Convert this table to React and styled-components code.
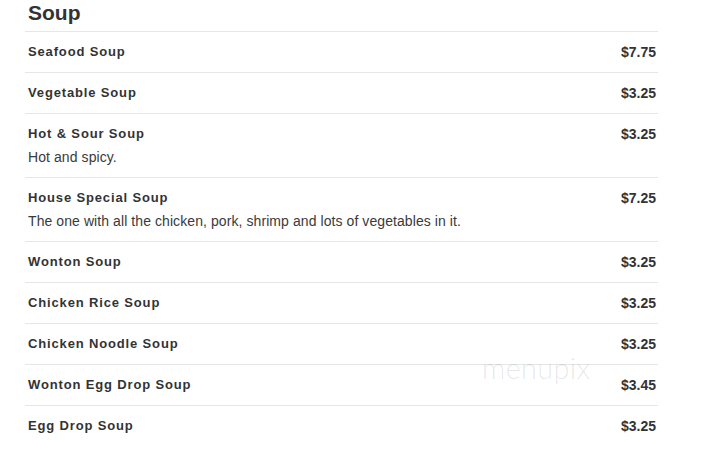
import React from "react";
import styled, { createGlobalStyle } from "styled-components";

const GlobalStyle = createGlobalStyle`
body {
  margin: 0;
  background: #fff;
  font-family: "Liberation Sans", Arial, sans-serif;
  color: #333;
}
`;

const Page = styled.div`
  position: relative;
  width: 633px;
  margin-left: 25px;
  padding-top: 1px;
`;

const Heading = styled.h2`
  margin: 0 0 6px 0;
  padding-left: 3px;
  font-size: 21px;
  line-height: 24px;
  font-weight: bold;
  color: #333;
`;

const Item = styled.div`
  border-top: 1px solid #e6e6e6;
  padding: 12px 2px 12px 3px;
`;

const ItemTop = styled.div`
  display: flex;
  justify-content: space-between;
  align-items: center;
`;

const Name = styled.span`
  font-size: 13px;
  line-height: 16px;
  font-weight: bold;
  letter-spacing: 0.85px;
`;

const Price = styled.span`
  font-size: 14px;
  line-height: 16px;
  font-weight: bold;
`;

const Desc = styled.div`
  margin-top: 7px;
  font-size: 14px;
  line-height: 16px;
  letter-spacing: 0.08px;
  color: #3a3a3a;
`;

const Watermark = styled.div`
  position: absolute;
  left: 457px;
  top: 350px;
  font-family: Lato, "Liberation Sans", sans-serif;
  font-weight: 300;
  font-size: 29px;
  letter-spacing: 0.3px;
  color: rgba(0, 0, 0, 0.1);
  pointer-events: none;
`;

const soups = [
  { name: "Seafood Soup", price: "$7.75" },
  { name: "Vegetable Soup", price: "$3.25" },
  { name: "Hot & Sour Soup", price: "$3.25", desc: "Hot and spicy." },
  {
    name: "House Special Soup",
    price: "$7.25",
    desc: "The one with all the chicken, pork, shrimp and lots of vegetables in it.",
  },
  { name: "Wonton Soup", price: "$3.25" },
  { name: "Chicken Rice Soup", price: "$3.25" },
  { name: "Chicken Noodle Soup", price: "$3.25" },
  { name: "Wonton Egg Drop Soup", price: "$3.45" },
  { name: "Egg Drop Soup", price: "$3.25" },
];

const App = () => {
  return (
    <>
      <GlobalStyle />
      <Page>
        <Heading>Soup</Heading>
        {soups.map((soup, index) => (
          <Item key={index}>
            <ItemTop>
              <Name>{soup.name}</Name>
              <Price>{soup.price}</Price>
            </ItemTop>
            {soup.desc && <Desc>{soup.desc}</Desc>}
          </Item>
        ))}
        <Watermark>menupix</Watermark>
      </Page>
    </>
  );
};

export default App;
